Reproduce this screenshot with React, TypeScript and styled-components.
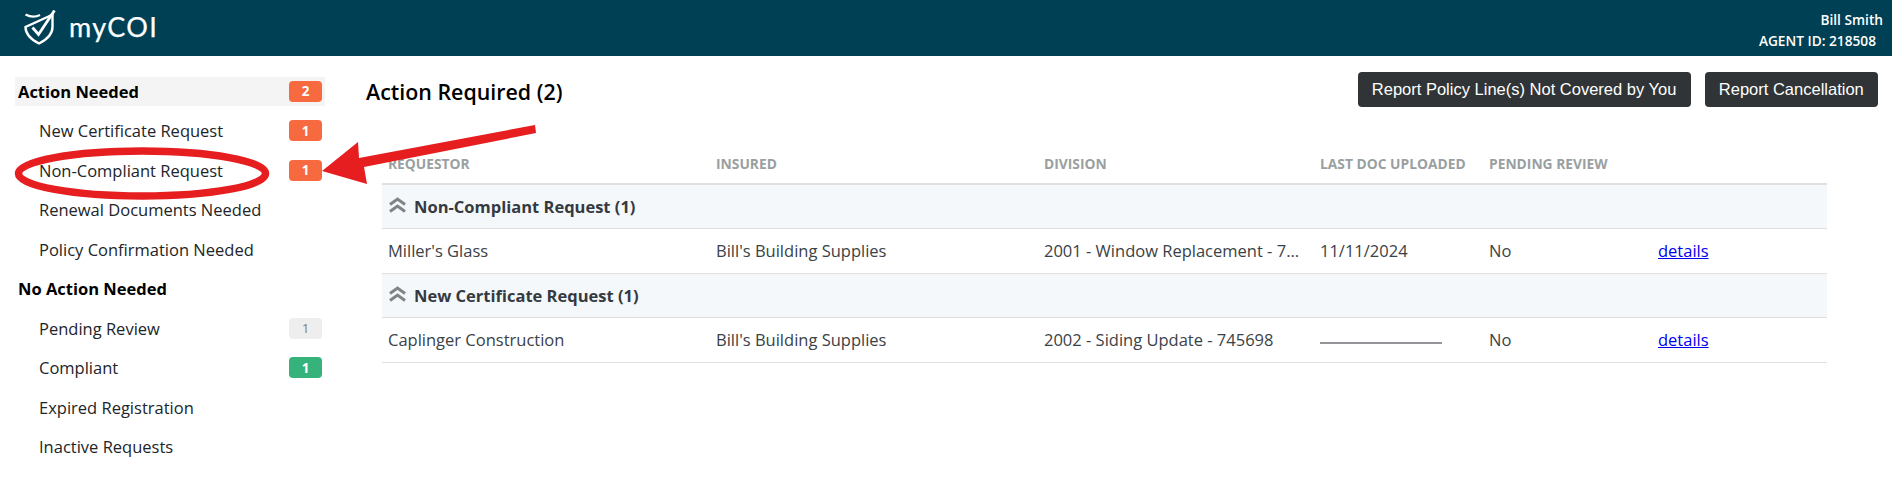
import React from "react";
import styled, { createGlobalStyle } from "styled-components";

const Global = createGlobalStyle`
  html, body { margin: 0; padding: 0; background: #fff; }
  body { font-family: "Open Sans", "Liberation Sans", sans-serif; color: #212529; }
`;

const Page = styled.div`
  position: relative;
  width: 1892px;
  height: 495px;
  overflow: hidden;
`;

const Header = styled.header`
  height: 56px;
  background: #004055;
  color: #fff;
  display: flex;
  align-items: center;
  justify-content: space-between;
  padding: 0 9px 0 24px;
`;

const Brand = styled.div`
  display: flex;
  align-items: center;
  gap: 13px;
`;

const BrandName = styled.span`
  font-family: "Lato", sans-serif;
  font-size: 27px;
  line-height: 1;
  letter-spacing: 1.3px;
  margin-top: -4px;
  -webkit-text-stroke: 0.25px #fff;
`;

const User = styled.div`
  display: flex;
  flex-direction: column;
  align-items: flex-end;
  font-size: 13.7px;
  font-weight: 600;
  line-height: 21px;
  margin-top: 4px;
`;

const AgentId = styled.span`
  padding-right: 7px;
`;

const Body = styled.div`
  display: flex;
  align-items: flex-start;
`;

const Sidebar = styled.nav`
  width: 310px;
  margin: 20.6px 0 0 15px;
  flex: none;
`;

const SideRow = styled.div<{ $active?: boolean; $child?: boolean }>`
  height: 29.5px;
  margin-bottom: 10px;
  display: flex;
  align-items: center;
  justify-content: space-between;
  padding: 0 3px 0 ${(p) => (p.$child ? "24px" : "3px")};
  background: ${(p) => (p.$active ? "#f4f4f4" : "transparent")};
  font-size: 16.5px;
  font-weight: ${(p) => (p.$child ? 400 : 700)};
  color: ${(p) => (p.$child ? "#212529" : "#000")};
`;

const badgeColors = {
  orange: ["#f7693e", "#fff"],
  gray: ["#eeeeee", "#7d7d7d"],
  green: ["#36b37a", "#fff"],
} as const;

const Badge = styled.span<{ $tone: keyof typeof badgeColors }>`
  width: 33px;
  height: 21px;
  border-radius: 4px;
  display: flex;
  align-items: center;
  justify-content: center;
  font-size: 13.5px;
  font-weight: ${(p) => (p.$tone === "gray" ? 400 : 700)};
  background: ${(p) => badgeColors[p.$tone][0]};
  color: ${(p) => badgeColors[p.$tone][1]};
`;

const Main = styled.main`
  margin: 16px 14px 0 41px;
  flex: 1;
  min-width: 0;
`;

const TopBar = styled.div`
  display: flex;
  align-items: center;
  justify-content: space-between;
  height: 35px;
`;

const Title = styled.h1`
  margin: 0;
  font-size: 21.4px;
  font-weight: 600;
  color: #000;
  line-height: 1;
  margin-top: 4px;
`;

const Actions = styled.div`
  display: flex;
  gap: 14px;
`;

const DarkButton = styled.button`
  height: 35px;
  padding: 0 14.25px;
  border: none;
  border-radius: 4px;
  background: #303436;
  color: #fff;
  font-family: "Liberation Sans", Arial, sans-serif;
  font-size: 16.5px;
`;

const Table = styled.table`
  table-layout: fixed;
  border-collapse: collapse;
  width: 1445px;
  margin: 42px 0 0 16px;
`;

const Th = styled.th<{ $w: number }>`
  width: ${(p) => p.$w}px;
  height: 35px;
  padding: 0 6px 5px;
  text-align: left;
  vertical-align: middle;
  font-size: 13.8px;
  font-weight: 700;
  color: #9a9fa1;
  text-transform: uppercase;
  white-space: nowrap;
  border-bottom: 2px solid #e2e0de;
  box-sizing: border-box;
`;

const GroupCell = styled.td`
  height: 44.5px;
  padding: 0 6px;
  background: #f5f8fb;
  border-bottom: 1.5px solid #e2e0de;
  box-sizing: border-box;
`;

const GroupLabel = styled.div`
  display: flex;
  align-items: center;
  gap: 8px;
  font-size: 16.5px;
  font-weight: 700;
  color: #343a40;
`;

const Chevrons = styled.svg`
  flex: none;
  margin: -3px 0 0 1px;
`;

const Td = styled.td`
  height: 44.5px;
  padding: 0 6px;
  font-size: 16.5px;
  color: #3a4246;
  white-space: nowrap;
  overflow: hidden;
  text-overflow: ellipsis;
  border-bottom: 1.5px solid #e2e0de;
  box-sizing: border-box;
`;

const EmptyDate = styled.div`
  width: 122px;
  height: 2px;
  background: #939598;
  margin-top: 6px;
`;

const DetailsLink = styled.a`
  color: #0000ee;
  text-decoration: underline;
`;

const Annotation = styled.svg`
  position: absolute;
  left: 0;
  top: 0;
  pointer-events: none;
`;

const navAction = [
  { label: "New Certificate Request", n: 1 },
  { label: "Non-Compliant Request", n: 1 },
  { label: "Renewal Documents Needed" },
  { label: "Policy Confirmation Needed" },
];

const groups = [
  {
    title: "Non-Compliant Request (1)",
    rows: [["Miller's Glass", "Bill's Building Supplies", "2001 - Window Replacement - 745697", "11/11/2024", "No"]],
  },
  {
    title: "New Certificate Request (1)",
    rows: [["Caplinger Construction", "Bill's Building Supplies", "2002 - Siding Update - 745698", "", "No"]],
  },
];

const columns: [string, number][] = [
  ["Requestor", 328],
  ["Insured", 328],
  ["Division", 276],
  ["Last Doc Uploaded", 169],
  ["Pending Review", 169],
  ["", 175],
];

export default function App() {
  return (
    <Page>
      <Global />
      <Header>
        <Brand>
          <svg width="32" height="36" viewBox="0 0 32 36" fill="none" stroke="#fff" strokeWidth="2.4">
            <path d="M1.5 4.5 C7 7.5 11 7.5 16 5 M24.5 6.5 L28.5 4.5 V17 C28.5 25 22 30 15 33.5 C8 30 1.5 25 1.5 17 Z" />
            <path d="M8.5 17.5 L14.5 24.5 L30.5 0.5" strokeWidth="2.8" />
          </svg>
          <BrandName>myCOI</BrandName>
        </Brand>
        <User>
          <span>Bill Smith</span>
          <AgentId>AGENT ID: 218508</AgentId>
        </User>
      </Header>
      <Body>
        <Sidebar>
          <SideRow $active>
            Action Needed
            <Badge $tone="orange">2</Badge>
          </SideRow>
          {navAction.map((i) => (
            <SideRow $child key={i.label}>
              {i.label}
              {i.n ? <Badge $tone="orange">{i.n}</Badge> : null}
            </SideRow>
          ))}
          <SideRow>No Action Needed</SideRow>
          <SideRow $child>
            Pending Review
            <Badge $tone="gray">1</Badge>
          </SideRow>
          <SideRow $child>
            Compliant
            <Badge $tone="green">1</Badge>
          </SideRow>
          <SideRow $child>Expired Registration</SideRow>
          <SideRow $child>Inactive Requests</SideRow>
        </Sidebar>
        <Main>
          <TopBar>
            <Title>Action Required (2)</Title>
            <Actions>
              <DarkButton>Report Policy Line(s) Not Covered by You</DarkButton>
              <DarkButton>Report Cancellation</DarkButton>
            </Actions>
          </TopBar>
          <Table>
            <thead>
              <tr>
                {columns.map(([c, w]) => (
                  <Th key={c || "actions"} $w={w}>
                    {c}
                  </Th>
                ))}
              </tr>
            </thead>
            <tbody>
              {groups.map((g) => (
                <React.Fragment key={g.title}>
                  <tr>
                    <GroupCell colSpan={6}>
                      <GroupLabel>
                        <Chevrons width="17" height="16" viewBox="0 0 17 16" fill="none" stroke="#808486" strokeWidth="3">
                          <path d="M1 7.5 L8.5 2 L16 7.5" />
                          <path d="M1 14.5 L8.5 9 L16 14.5" />
                        </Chevrons>
                        {g.title}
                      </GroupLabel>
                    </GroupCell>
                  </tr>
                  {g.rows.map((r) => (
                    <tr key={r[0]}>
                      <Td>{r[0]}</Td>
                      <Td>{r[1]}</Td>
                      <Td>{r[2]}</Td>
                      <Td>{r[3] || <EmptyDate />}</Td>
                      <Td>{r[4]}</Td>
                      <Td>
                        <DetailsLink href="#">details</DetailsLink>
                      </Td>
                    </tr>
                  ))}
                </React.Fragment>
              ))}
            </tbody>
          </Table>
        </Main>
      </Body>
      <Annotation width="1892" height="495" viewBox="0 0 1892 495">
        <ellipse cx="142" cy="173.5" rx="123.5" ry="22.5" fill="none" stroke="#e61e20" strokeWidth="7.5" />
        <polygon points="322,171 358,142 359,158 535,125 536,133 364,167 367,184" fill="#e61e20" />
      </Annotation>
    </Page>
  );
}
